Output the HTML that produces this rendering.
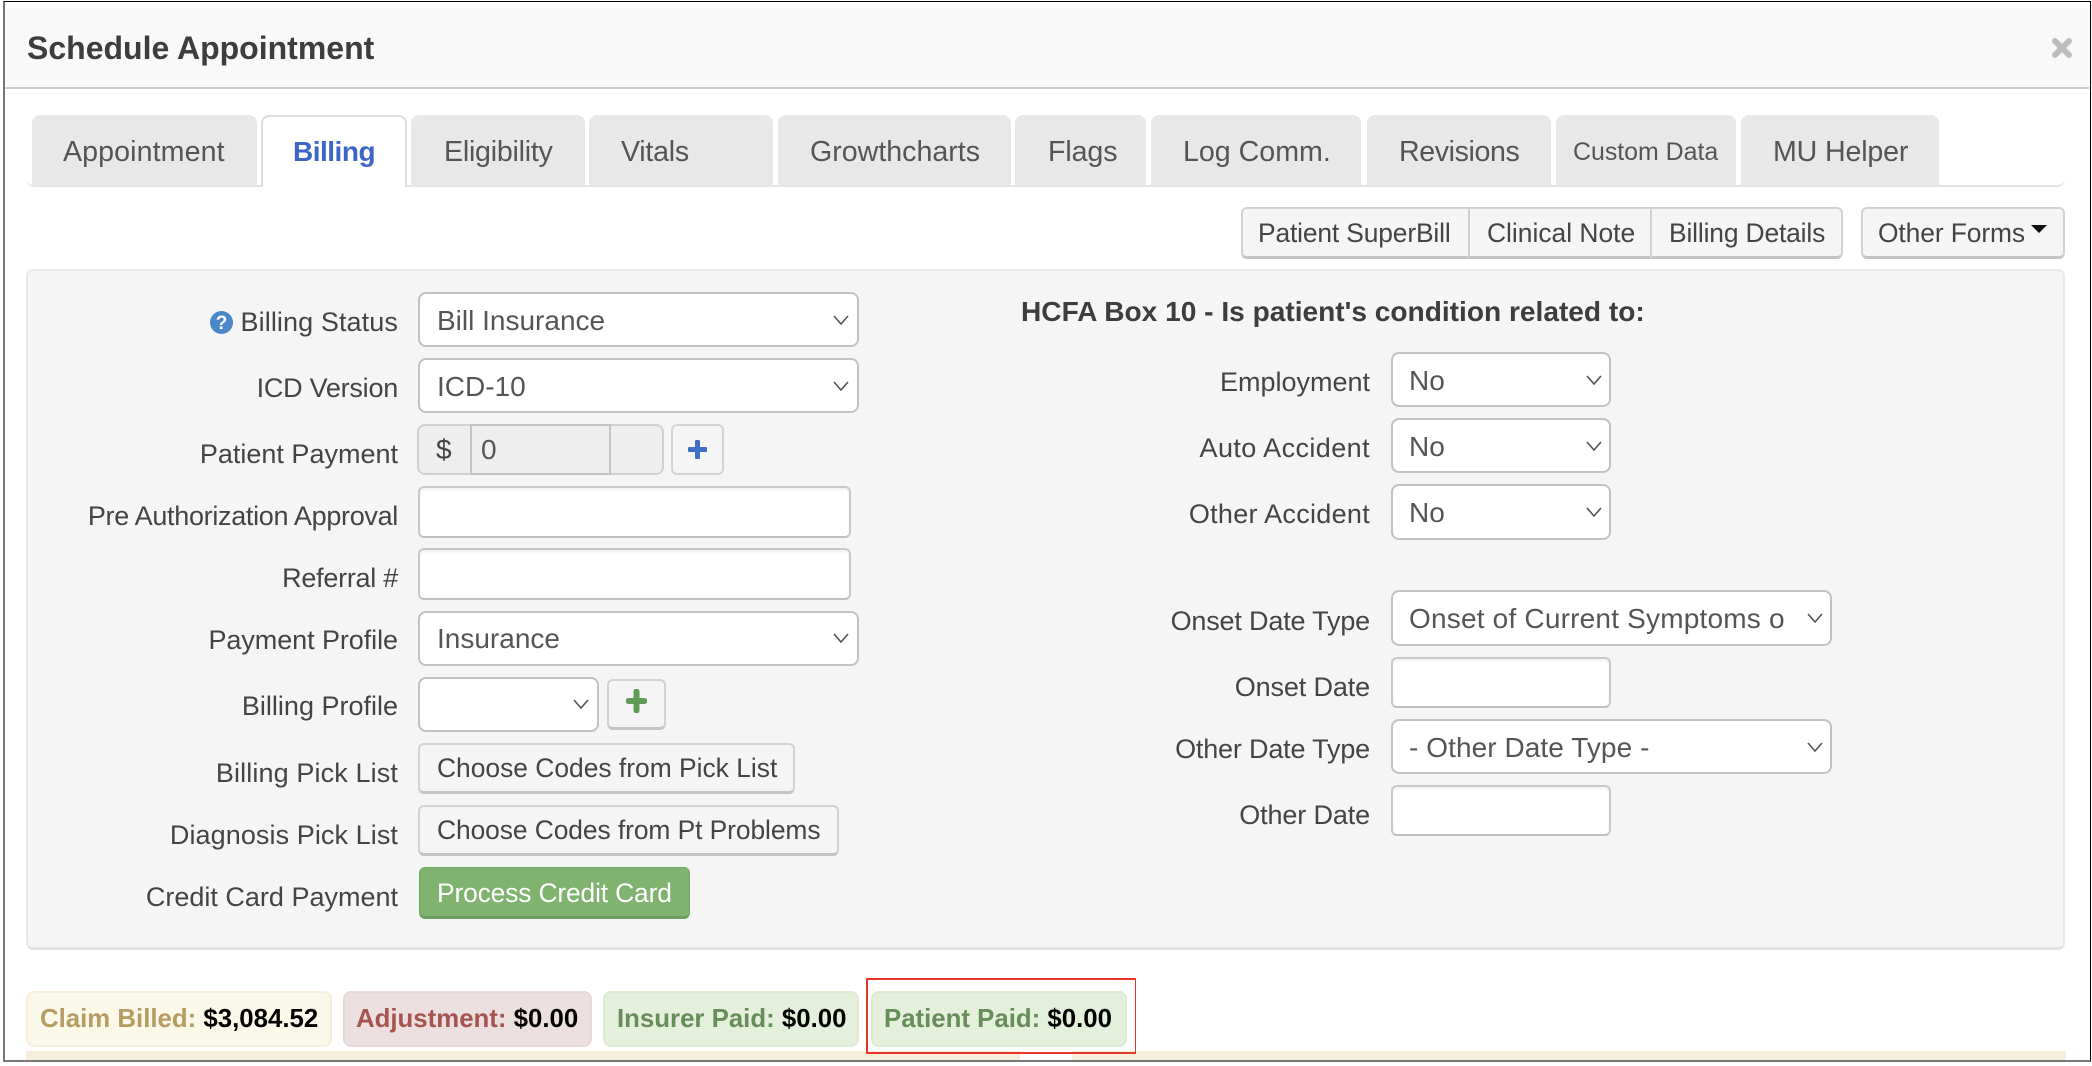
<!DOCTYPE html>
<html lang="en">
<head>
<meta charset="utf-8">
<title>Schedule Appointment</title>
<style>
*{box-sizing:border-box}
html,body{margin:0;padding:0;width:2092px;height:1066px;overflow:hidden;background:#fff}
body{position:relative;font-family:"Liberation Sans",Arial,sans-serif;color:#444}
.a{position:absolute}
.t{position:absolute;line-height:0;white-space:nowrap;top:calc(var(--b)*1px - .3465em)}
.frame{position:absolute;left:3px;top:1px;width:2088px;height:1061px;border-top:1px solid #000;border-right:1px solid #000;border-left:2px solid #777;border-bottom:2px solid #777}
.head{position:absolute;left:5px;top:8px;width:2084px;height:81px;background:#f9f9f9;border-bottom:2px solid #ccc}
.tabline{position:absolute;left:26px;top:150px;width:2039px;height:37px;border-bottom:2px solid #e2e2e2;border-radius:0 0 8px 8px}
.tab{position:absolute;top:115px;height:71px;background:#e8e8e8;border-radius:8px 8px 0 0}
.tab.on{background:#fff;border:2px solid #ddd;border-bottom:0;height:72px}
.tt{font-size:28.6px;color:#555}
.btn{position:absolute;background:#f5f5f5;border:2px solid #d2d2d2;border-bottom:3px solid #c4c4c4;border-radius:6px}
.panel{position:absolute;left:26px;top:269px;width:2039px;height:681px;background:#f5f5f5;border:2px solid #e9e9e9;border-bottom:3px solid #e2e2e2;border-radius:7px}
.l{left:0;font-size:27px;color:#444;text-align:right;width:398px}
.r{left:0;font-size:27px;color:#444;text-align:right;width:1370px}
.s{position:absolute;background:#fff;border:2px solid #c2c2c2;border-radius:8px}
.i{position:absolute;background:#fff;border:2px solid #c8c8c8;border-bottom:2px solid #c0c0c0;border-radius:6px;box-shadow:inset 0 2px 2px rgba(0,0,0,.06)}
.v{font-size:28px;color:#555}
.b{font-size:26.4px;color:#444}
.chev{position:absolute;width:16px;height:10px}
.badge{position:absolute;top:991px;height:56px;border-radius:8px;border:2px solid}
.bt{font-size:25.8px;font-weight:bold;color:#000}
</style>
</head>
<body>
<div class="frame"></div>
<div class="head"></div>
<div class="t" style="--b:59;left:27px;font-size:32px;font-weight:bold;color:#3d3d3d">Schedule Appointment</div>
<svg class="a" style="left:2052px;top:38px" width="20" height="20" viewBox="0 0 20 20"><path d="M3 3L17 17M17 3L3 17" stroke="#bdbdbd" stroke-width="6" stroke-linecap="round" fill="none"/></svg>

<div class="tabline"></div>
<div class="tab" style="left:32px;width:225px"></div>
<div class="tab on" style="left:261px;width:146px"></div>
<div class="tab" style="left:411px;width:174px"></div>
<div class="tab" style="left:589px;width:184px"></div>
<div class="tab" style="left:778px;width:233px"></div>
<div class="tab" style="left:1015px;width:131px"></div>
<div class="tab" style="left:1151px;width:210px"></div>
<div class="tab" style="left:1367px;width:184px"></div>
<div class="tab" style="left:1556px;width:180px"></div>
<div class="tab" style="left:1741px;width:198px"></div>
<div class="t tt" style="--b:162;left:63px;letter-spacing:.1px">Appointment</div>
<div class="t" style="--b:162;left:293px;font-size:28px;letter-spacing:-.5px;font-weight:bold;color:#3b66c8">Billing</div>
<div class="t tt" style="--b:162;left:444px;letter-spacing:-.24px">Eligibility</div>
<div class="t tt" style="--b:162;left:621px;letter-spacing:-.25px">Vitals</div>
<div class="t tt" style="--b:162;left:810px">Growthcharts</div>
<div class="t tt" style="--b:162;left:1048px;letter-spacing:-.1px">Flags</div>
<div class="t tt" style="--b:162;left:1183px">Log Comm.</div>
<div class="t tt" style="--b:162;left:1399px;letter-spacing:-.4px">Revisions</div>
<div class="t" style="--b:161;left:1573px;font-size:24.9px;color:#555">Custom Data</div>
<div class="t tt" style="--b:162;left:1773px;letter-spacing:-.15px">MU Helper</div>

<div class="btn" style="left:1241px;top:207px;width:602px;height:52px"></div>
<div class="a" style="left:1468px;top:208px;width:2px;height:50px;background:#cfcfcf"></div>
<div class="a" style="left:1650px;top:208px;width:2px;height:50px;background:#d2d2d2"></div>
<div class="btn" style="left:1861px;top:207px;width:204px;height:52px"></div>
<div class="t b" style="--b:242;left:1258px;letter-spacing:-.15px">Patient SuperBill</div>
<div class="t b" style="--b:242;left:1487px">Clinical Note</div>
<div class="t b" style="--b:242;left:1669px;letter-spacing:-.15px">Billing Details</div>
<div class="t b" style="--b:242;left:1878px;letter-spacing:-.1px">Other Forms</div>
<svg class="a" style="left:2031px;top:225px" width="16" height="8" viewBox="0 0 16 8"><path d="M0 0H16L8 8Z" fill="#111"/></svg>

<div class="panel"></div>

<!-- left column -->
<svg class="a" style="left:210px;top:311px" width="23" height="23" viewBox="0 0 23 23"><circle cx="11.5" cy="11.5" r="11.5" fill="#4a86c8"/><text x="11.5" y="18" text-anchor="middle" font-family="Liberation Sans" font-size="19" font-weight="bold" fill="#fff">?</text></svg>
<div class="t l" style="--b:331;letter-spacing:.1px">Billing Status</div>
<div class="s" style="left:418px;top:292px;width:441px;height:55px"></div>
<div class="t v" style="--b:331;left:437px">Bill Insurance</div>
<svg class="chev" style="left:833px;top:315px" viewBox="0 0 16 10"><path d="M1 1L8 9L15 1" fill="none" stroke="#555" stroke-width="1.6"/></svg>

<div class="t l" style="--b:397;letter-spacing:-.24px">ICD Version</div>
<div class="s" style="left:418px;top:358px;width:441px;height:55px"></div>
<div class="t v" style="--b:397;left:437px">ICD-10</div>
<svg class="chev" style="left:833px;top:381px" viewBox="0 0 16 10"><path d="M1 1L8 9L15 1" fill="none" stroke="#555" stroke-width="1.6"/></svg>

<div class="t l" style="--b:463">Patient Payment</div>
<div class="a" style="left:417px;top:424px;width:247px;height:51px;background:#eee;border:2px solid #d0d0d0;border-radius:8px"></div>
<div class="a" style="left:470px;top:424px;width:141px;height:51px;background:#eee;border:2px solid #c4c4c4;border-right-width:2px"></div>
<div class="t v" style="--b:460;left:436px;color:#444">$</div>
<div class="t v" style="--b:460;left:481px">0</div>
<div class="a" style="left:671px;top:424px;width:53px;height:51px;background:#f5f5f5;border:2px solid #d4d4d4;border-radius:6px"></div>
<svg class="a" style="left:688px;top:440px" width="19" height="19" viewBox="0 0 19 19"><path d="M9.5 1.5V17.5M1.5 9.5H17.5" stroke="#3f6fc6" stroke-width="5" stroke-linecap="round" fill="none"/></svg>

<div class="t l" style="--b:525;letter-spacing:-.31px">Pre Authorization Approval</div>
<div class="i" style="left:418px;top:486px;width:433px;height:52px"></div>
<div class="t l" style="--b:587;letter-spacing:-.27px">Referral #</div>
<div class="i" style="left:418px;top:548px;width:433px;height:52px"></div>

<div class="t l" style="--b:649;letter-spacing:-.07px">Payment Profile</div>
<div class="s" style="left:418px;top:611px;width:441px;height:55px"></div>
<div class="t v" style="--b:649;left:437px">Insurance</div>
<svg class="chev" style="left:833px;top:633px" viewBox="0 0 16 10"><path d="M1 1L8 9L15 1" fill="none" stroke="#555" stroke-width="1.6"/></svg>

<div class="t l" style="--b:715">Billing Profile</div>
<div class="s" style="left:418px;top:677px;width:181px;height:55px"></div>
<svg class="chev" style="left:573px;top:699px" viewBox="0 0 16 10"><path d="M1 1L8 9L15 1" fill="none" stroke="#555" stroke-width="1.6"/></svg>
<div class="btn" style="left:607px;top:679px;width:59px;height:51px"></div>
<svg class="a" style="left:626px;top:689px" width="21" height="24" viewBox="0 0 21 24"><path d="M10.5 2.5V21.500M2.500 12H18.500" stroke="#5f9b57" stroke-width="6" stroke-linecap="round" fill="none"/></svg>

<div class="t l" style="--b:782;letter-spacing:.12px">Billing Pick List</div>
<div class="btn" style="left:418px;top:743px;width:377px;height:51px"></div>
<div class="t b" style="--b:777;left:437px">Choose Codes from Pick List</div>

<div class="t l" style="--b:844;letter-spacing:.08px">Diagnosis Pick List</div>
<div class="btn" style="left:418px;top:805px;width:421px;height:51px"></div>
<div class="t b" style="--b:839;left:437px;letter-spacing:-.08px">Choose Codes from Pt Problems</div>

<div class="t l" style="--b:906">Credit Card Payment</div>
<div class="a" style="left:419px;top:867px;width:271px;height:52px;background:#80b270;border:1px solid #74a965;border-bottom:3px solid #6f9e62;border-radius:6px"></div>
<div class="t" style="--b:902;left:437px;font-size:26.4px;letter-spacing:-.15px;color:#fff">Process Credit Card</div>

<!-- right column -->
<div class="t" style="--b:322;left:1021px;font-size:28.1px;font-weight:bold;color:#3d3d3d">HCFA Box 10 - Is patient's condition related to:</div>

<div class="t r" style="--b:391">Employment</div>
<div class="s" style="left:1391px;top:352px;width:220px;height:55px"></div>
<div class="t v" style="--b:391;left:1409px">No</div>
<svg class="chev" style="left:1586px;top:375px" viewBox="0 0 16 10"><path d="M1 1L8 9L15 1" fill="none" stroke="#555" stroke-width="1.6"/></svg>

<div class="t r" style="--b:457;letter-spacing:.41px">Auto Accident</div>
<div class="s" style="left:1391px;top:418px;width:220px;height:55px"></div>
<div class="t v" style="--b:457;left:1409px">No</div>
<svg class="chev" style="left:1586px;top:441px" viewBox="0 0 16 10"><path d="M1 1L8 9L15 1" fill="none" stroke="#555" stroke-width="1.6"/></svg>

<div class="t r" style="--b:523;letter-spacing:.29px">Other Accident</div>
<div class="s" style="left:1391px;top:484px;width:220px;height:56px"></div>
<div class="t v" style="--b:523;left:1409px">No</div>
<svg class="chev" style="left:1586px;top:507px" viewBox="0 0 16 10"><path d="M1 1L8 9L15 1" fill="none" stroke="#555" stroke-width="1.6"/></svg>

<div class="t r" style="--b:630;letter-spacing:-.18px">Onset Date Type</div>
<div class="s" style="left:1391px;top:590px;width:441px;height:56px"></div>
<div class="t v" style="--b:629;left:1409px;letter-spacing:.2px">Onset of Current Symptoms o</div>
<svg class="chev" style="left:1807px;top:613px" viewBox="0 0 16 10"><path d="M1 1L8 9L15 1" fill="none" stroke="#555" stroke-width="1.6"/></svg>

<div class="t r" style="--b:696;letter-spacing:-.13px">Onset Date</div>
<div class="i" style="left:1391px;top:657px;width:220px;height:51px"></div>

<div class="t r" style="--b:758;letter-spacing:-.18px">Other Date Type</div>
<div class="s" style="left:1391px;top:719px;width:441px;height:55px"></div>
<div class="t v" style="--b:758;left:1409px;letter-spacing:.07px">- Other Date Type -</div>
<svg class="chev" style="left:1807px;top:742px" viewBox="0 0 16 10"><path d="M1 1L8 9L15 1" fill="none" stroke="#555" stroke-width="1.6"/></svg>

<div class="t r" style="--b:824;letter-spacing:-.13px">Other Date</div>
<div class="i" style="left:1391px;top:785px;width:220px;height:51px"></div>

<!-- badges -->
<div class="badge" style="left:26px;width:306px;background:#faf8e9;border-color:#f7eedd"></div>
<div class="t bt" style="--b:1028;left:40px"><span style="color:#b59c62">Claim Billed:</span> $3,084.52</div>
<div class="badge" style="left:343px;width:249px;background:#ecdfdf;border-color:#e7d8da"></div>
<div class="t bt" style="--b:1028;left:356px"><span style="color:#a5544f">Adjustment:</span> $0.00</div>
<div class="badge" style="left:603px;width:256px;background:#e4efdc;border-color:#deead3"></div>
<div class="t bt" style="--b:1028;left:617px"><span style="color:#678d5a">Insurer Paid:</span> $0.00</div>
<div class="badge" style="left:871px;width:256px;background:#e4efdc;border-color:#deead3"></div>
<div class="t bt" style="--b:1028;left:884px"><span style="color:#678d5a">Patient Paid:</span> $0.00</div>

<div class="a" style="left:26px;top:1051px;width:994px;height:9px;background:#f5eedb"></div>
<div class="a" style="left:1072px;top:1051px;width:994px;height:9px;background:#f5eedb"></div>
<div class="a" style="left:866px;top:978px;width:270px;height:76px;border:1px solid #e8352a;border-left-width:2px;border-top-width:2px;border-bottom-width:2px"></div>
</body>
</html>
